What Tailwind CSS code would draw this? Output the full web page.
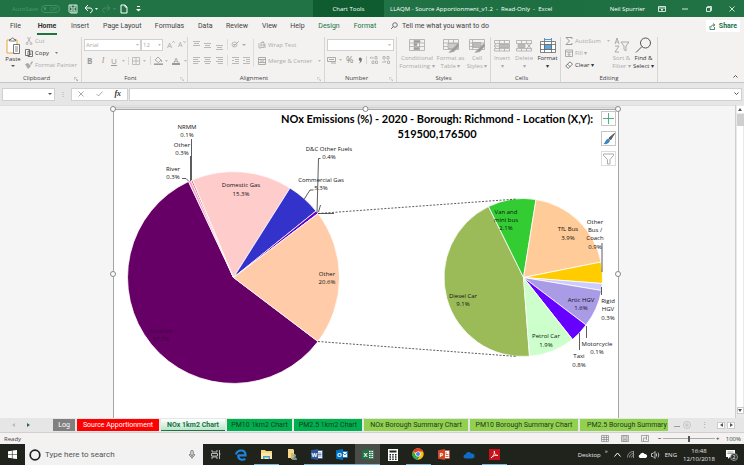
<!DOCTYPE html>
<html lang="en">
<head>
  <meta charset="UTF-8" />
  <meta name="viewport" content="width=device-width, initial-scale=1.0" />
  <title>LLAQM - Source Apportionment_v1.2 - Read-Only - Excel</title>
  <script src="https://cdn.jsdelivr.net/npm/@tailwindcss/browser@4"></script>
</head>
<body class="h-screen flex flex-col overflow-hidden bg-[#e6e6e6] font-['Open_Sans',sans-serif] text-[6px] leading-[8px] text-[#444]">

<!-- Title bar -->
<header class="h-[17px] shrink-0 flex items-center bg-[#217346] text-white">
  <div class="w-[313px] flex items-center pl-3">
    <label for="autosave" class="text-[#4f9570] w-[29px]">AutoSave</label>
    <button id="autosave" class="w-[19px] h-2 rounded-full border border-[#438d64] flex items-center gap-1 px-[2px] text-[5px] leading-[6px] text-[#4f9570]"><span class="size-[3px] rounded-full bg-[#4f9570]"></span>Off</button>
    <button aria-label="Save" class="ml-2 w-[10px]"><svg viewBox="0 0 10 10" class="size-[10px]" fill="none" stroke="#dcebe2"><path d="M1 1h8v8H2.500L1 7.500zM3 1v3h4V1M3 9V6h4v3M5 7v2"/></svg></button>
    <button aria-label="Undo" class="ml-[6px] w-[14px]"><svg viewBox="0 0 14 10" class="w-[14px] h-[10px]" fill="none" stroke="#fff"><path d="M4 1 1 4l3 3M1 4h5c3 0 3 4 0 5"/><path d="M11 4h3l-1.500 2z" fill="#fff" stroke="none"/></svg></button>
    <button aria-label="Redo" class="ml-1 w-[14px]"><svg viewBox="0 0 14 10" class="w-[14px] h-[10px]" fill="none" stroke="#438d64"><path d="M5 1l3 3-3 3M8 4H3C0 4 0 8 3 9"/><path d="M11 4h3l-1.500 2z" fill="#438d64" stroke="none"/></svg></button>
    <button aria-label="New" class="ml-1 w-2"><svg viewBox="0 0 8 10" class="w-2 h-[10px]" fill="none" stroke="#fff"><path d="M1 1h4l2 2v6H1zM5 1v2h2"/></svg></button>
    <button aria-label="Customize" class="ml-2 w-[5px]"><svg viewBox="0 0 5 6" class="w-[5px] h-[6px]" fill="#fff"><path d="M1 0h3v1H1zM0 3h5L2.500 5.500z"/></svg></button>
  </div>
  <div class="w-[71px] h-full flex items-center justify-center bg-[#0e5c2f]">Chart Tools</div>
  <div class="flex-1 h-full flex items-center bg-linear-to-r from-[#217346] via-[#1d6e41] to-[#217346] pl-[6px]">
    <span class="flex-1 whitespace-pre">LLAQM - Source Apportionment_v1.2  -  Read-Only  -  Excel</span>
    <span>Neil Spurrier</span>
    <button aria-label="Ribbon options" class="ml-[13px] w-2"><svg viewBox="0 0 8 6" class="w-2 h-[6px]" fill="none" stroke="#fff" stroke-width=".8"><path d="M.5.5h7v5h-7zM.5 2h7M4 5V3M3 4l1-1 1 1"/></svg></button>
    <button aria-label="Minimize" class="ml-4 w-[6px]"><svg viewBox="0 0 6 6" class="size-[6px]" stroke="#fff" stroke-width=".8"><path d="M0 3h6"/></svg></button>
    <button aria-label="Restore" class="ml-[18px] w-[6px]"><svg viewBox="0 0 6 6" class="size-[6px]" fill="none" stroke="#fff" stroke-width=".8"><path d="M.5 1.500h4v4h-4zM1.500 1.500v-1h4v4h-1"/></svg></button>
    <button aria-label="Close" class="ml-[17px] mr-[9px] w-[6px]"><svg viewBox="0 0 6 6" class="size-[6px]" stroke="#fff" stroke-width=".8"><path d="M.5.5l5 5M5.500.5l-5 5"/></svg></button>
  </div>
</header>

<!-- Ribbon tabs -->
<nav class="h-[18px] shrink-0 flex items-center bg-[#f3f2f1] pl-[10px] pr-1 font-['Roboto',sans-serif] text-[7px]">
  <button class="w-[27px] text-left">File</button>
  <button class="w-5 h-[14px] mt-1 pb-[2px] border-b-2 border-[#217346] font-bold text-[#333]">Home</button>
  <button class="w-[46px] text-center">Insert</button>
  <button class="w-[38px] whitespace-nowrap">Page Layout</button>
  <button class="w-[57px]">Formulas</button>
  <button class="w-[14px]">Data</button>
  <button class="w-[50px]">Review</button>
  <button class="w-[15px]">View</button>
  <button class="w-[41px]">Help</button>
  <button class="w-[22px] text-[#217346]">Design</button>
  <button class="w-[50px] text-[#217346]">Format</button>
  <svg viewBox="0 0 8 8" class="size-2 mr-1" fill="none" stroke="#555" stroke-width=".8"><circle cx="5" cy="3" r="2.300"/><path d="M3.300 4.700 1 7"/></svg>
  <input aria-label="Tell me" class="flex-1 min-w-0 placeholder:text-[#444] outline-none" placeholder="Tell me what you want to do">
  <button class="bg-white w-[34px] h-3 flex items-center justify-center gap-[3px] text-[#217346] font-bold"><svg viewBox="0 0 7 7" class="size-[7px]" fill="none" stroke="#217346" stroke-width=".8"><path d="M1 3v3.500h4.500V4M2 4.500C2 2.500 3 2 5 2M4 .5 6 2 4 3.500"/></svg>Share</button>
</nav>

<!-- Ribbon -->
<section class="h-[48px] shrink-0 flex bg-[#f3f2f1] border-b border-[#c8c6c4] pt-[2px] text-[#aaa] whitespace-nowrap">
  <div class="w-[82px] border-r border-[#d8d6d4] flex flex-col">
    <div class="flex-1 flex pl-[5px]">
      <button class="w-4 flex flex-col items-center text-[#333] mr-1"><svg viewBox="0 0 16 18" class="w-4 h-[18px]" fill="#fff"><path d="M2 3h10v13H2z" stroke="#e8a33d"/><path d="M4.500 4V2.500h1.500a1.500 1.500 0 0 1 3 0h1.500V4z" stroke="#555" stroke-width=".8"/><path d="M8.500 7.500h6v9h-6z" stroke="#555" stroke-width=".8"/><path d="M10 10h3m-3 2h3m-3 2h3" stroke="#555" stroke-width=".7"/></svg>Paste<svg viewBox="0 0 4 2" class="w-1 h-[2px] mt-[2px]" fill="#555"><path d="M0 0h4L2 2z"/></svg></button>
      <div class="flex flex-col gap-1">
        <button class="flex items-center gap-[2px]"><svg viewBox="0 0 8 8" class="size-2" fill="none" stroke="#aaa" stroke-width=".8"><path d="M2.500 0l3 5.500M5.500 0l-3 5.500"/><circle cx="2" cy="6.500" r="1"/><circle cx="6" cy="6.500" r="1"/></svg>Cut</button>
        <button class="flex items-center gap-[2px] text-[#333]"><svg viewBox="0 0 8 8" class="size-2" fill="#fff" stroke="#555" stroke-width=".8"><path d="M.5.5h4v6h-4zM3 2h4.500v5.500H3zM4 4h2.500M4 5.500h2.500"/></svg>Copy<svg viewBox="0 0 4 2" class="w-[3px] h-[2px] ml-1" fill="#555"><path d="M0 0h4L2 2z"/></svg></button>
        <button class="flex items-center gap-[2px]"><svg viewBox="0 0 8 8" class="size-2" fill="#aaa"><path d="M0 3l3-1 3 3-3 3zM5 3l2-3 1 1-2 3z"/></svg>Format Painter</button>
      </div>
    </div>
    <div class="text-center text-[#444] relative pr-2">Clipboard<svg viewBox="0 0 4 4" class="absolute right-[3px] top-[3px] size-1" fill="none" stroke="#999" stroke-width=".7"><path d="M0 3V0h3M1.500 1.500 4 4M4 2v2H2"/></svg></div>
  </div>

  <div class="w-[106px] border-r border-[#d8d6d4] flex flex-col">
    <div class="flex-1 flex flex-col gap-[5px] pl-[2px] pt-[2px]">
      <div class="flex items-center">
        <div class="relative w-[57px]"><select aria-label="Font" class="appearance-none w-full h-3 px-[1px] bg-white border border-[#d0d0d0]"><option>Arial</option></select><svg viewBox="0 0 4 2" class="absolute right-[2px] top-[5px] w-[3px] h-[2px]" fill="#aaa"><path d="M0 0h4L2 2z"/></svg></div>
        <div class="relative w-[22px]"><select aria-label="Font size" class="appearance-none w-full h-3 px-[1px] bg-white border border-[#d0d0d0]"><option>12</option></select><svg viewBox="0 0 4 2" class="absolute right-[2px] top-[5px] w-[3px] h-[2px]" fill="#aaa"><path d="M0 0h4L2 2z"/></svg></div>
        <button aria-label="Increase font size" class="ml-1 flex text-[8px]">A<svg viewBox="0 0 3 2" class="w-[3px] h-[2px]" fill="none" stroke="#999" stroke-width=".7"><path d="M.3 1.700 1.500.5l1.200 1.200"/></svg></button>
        <button aria-label="Decrease font size" class="ml-[3px] flex text-[7px]">A<svg viewBox="0 0 3 2" class="w-[3px] h-[2px]" fill="none" stroke="#999" stroke-width=".7"><path d="M.3.300 1.500 1.500 2.700.3"/></svg></button>
      </div>
      <div class="flex items-center pl-[3px] text-[8px] text-[#999]">
        <button class="font-bold w-[11px] text-left">B</button>
        <button class="italic font-['Liberation_Serif',serif] w-[11px]">I</button>
        <button class="underline w-[11px]">U</button>
        <svg viewBox="0 0 4 2" class="w-[3px] h-[2px] ml-[3px]" fill="#aaa"><path d="M0 0h4L2 2z"/></svg>
        <button aria-label="Borders" class="ml-[3px] pl-[3px] border-l border-[#d8d6d4]"><svg viewBox="0 0 8 8" class="size-2" fill="none" stroke="#aaa" stroke-width=".7"><path d="M.5.500h7v7h-7zM4 .5v7M.5 4h7"/></svg></button>
        <svg viewBox="0 0 4 2" class="w-[3px] h-[2px] ml-[3px]" fill="#aaa"><path d="M0 0h4L2 2z"/></svg>
        <button aria-label="Fill colour" class="ml-1 pl-[3px] border-l border-[#d8d6d4]"><svg viewBox="0 0 9 9" class="size-[9px]" fill="none" stroke="#999" stroke-width=".8"><path d="M1 4l3-3 3 3-2.500 2.500zM7.500 4v2"/><path d="M0 8.200h9" stroke-width="1.500"/></svg></button>
        <svg viewBox="0 0 4 2" class="w-[3px] h-[2px] ml-[2px]" fill="#aaa"><path d="M0 0h4L2 2z"/></svg>
        <button class="ml-1 w-2 border-b-2 border-[#999] leading-[7px]">A</button>
        <svg viewBox="0 0 4 2" class="w-[3px] h-[2px] ml-1" fill="#aaa"><path d="M0 0h4L2 2z"/></svg>
      </div>
    </div>
    <div class="text-center text-[#444] relative pr-2">Font<svg viewBox="0 0 4 4" class="absolute right-[3px] top-[3px] size-1" fill="none" stroke="#bbb" stroke-width=".7"><path d="M0 3V0h3M1.500 1.500 4 4M4 2v2H2"/></svg></div>
  </div>

  <div class="w-[137px] border-r border-[#d8d6d4] flex flex-col">
    <div class="flex-1 flex pl-[5px]">
      <svg viewBox="0 0 62 32" class="w-[62px] h-8" fill="none" stroke="#aaa" stroke-width=".8">
        <path d="M0 4.500h7M1 6.500h5M0 8.500h7M11 6.500h7M12 8.500h5M11 10.500h7M23 8.500h7M24 10.500h5M23 12.500h7"/>
        <path d="M0 20.500h7M0 22.500h5M0 24.500h7M0 26.500h5M11 20.500h7M12 22.500h5M11 24.500h7M12 26.500h5M23 20.500h7M25 22.500h5M23 24.500h7M25 26.500h5"/>
        <path d="M34.500 2v11M34.500 18v11M60.500 2v28" stroke="#d8d6d4"/>
        <path d="M39 20.500h7M42 22.500h4M42 24.500h4M39 26.500h7M41 23.500h-2M50 20.500h7M53 22.500h4M53 24.500h4M50 26.500h7M50 23.500h2"/>
        <circle cx="41.500" cy="7.500" r="2.500"/><path d="M40 10l6-6M40 7.500h3"/><path d="M49 7h4l-2 2z" fill="#aaa" stroke="none"/>
      </svg>
      <div class="flex flex-col gap-2 pt-1 pl-[3px]">
        <button class="flex items-center gap-[2px]"><svg viewBox="0 0 8 8" class="size-2" fill="none" stroke="#aaa" stroke-width=".8"><path d="M1 2v5h2M3 1.500h3v5H3zM3 4h4M5 0v2M7 3v4"/></svg>Wrap Text</button>
        <button class="flex items-center gap-[2px]"><svg viewBox="0 0 8 8" class="size-2" fill="none" stroke="#999" stroke-width=".8"><path d="M.5.500h7v7h-7zM.5 2.500h7M.5 5.500h7M2 4h4"/></svg>Merge &amp; Center<svg viewBox="0 0 4 2" class="w-[3px] h-[2px] ml-1" fill="#aaa"><path d="M0 0h4L2 2z"/></svg></button>
      </div>
    </div>
    <div class="text-center text-[#444] relative pr-1">Alignment<svg viewBox="0 0 4 4" class="absolute right-[3px] top-[3px] size-1" fill="none" stroke="#bbb" stroke-width=".7"><path d="M0 3V0h3M1.500 1.500 4 4M4 2v2H2"/></svg></div>
  </div>

  <div class="w-[72px] border-r border-[#d8d6d4] flex flex-col">
    <div class="flex-1 flex flex-col gap-1 px-[2px] pt-[2px]">
      <div class="relative"><select aria-label="Number format" class="appearance-none w-full h-3 bg-white border border-[#d0d0d0]"><option></option></select><svg viewBox="0 0 4 2" class="absolute right-[3px] top-[5px] w-[3px] h-[2px]" fill="#aaa"><path d="M0 0h4L2 2z"/></svg></div>
      <div class="flex items-center text-[#888]">
        <button aria-label="Currency"><svg viewBox="0 0 9 8" class="w-[9px] h-2" fill="none" stroke="#999" stroke-width=".8"><path d="M.5 1.500h8v4h-8zM4 7h5M2 3.500h5"/></svg></button>
        <svg viewBox="0 0 4 2" class="w-[3px] h-[2px] ml-[3px]" fill="#aaa"><path d="M0 0h4L2 2z"/></svg>
        <button class="ml-1 text-[9px] leading-[10px]">%</button>
        <button aria-label="Comma style" class="ml-[5px]"><svg viewBox="0 0 4 7" class="w-1 h-[7px]" fill="#777"><path d="M2 .5a1.800 1.800 0 0 1 1.900 2C3.900 4.500 2.500 6 .8 6.500 1.800 5.500 2.200 4.800 2.200 4A1.800 1.800 0 0 1 2 .5z"/></svg></button>
        <button aria-label="Increase decimal" class="ml-1 pl-[3px] border-l border-[#d8d6d4]"><svg viewBox="0 0 8 8" class="size-2" fill="none" stroke="#aaa" stroke-width=".8"><path d="M4 2H0l1.500-1.500M5 .5h2v2.500H5zM2 5h2v2.500H2zM5.500 5h2v2.500h-2z"/></svg></button>
        <button aria-label="Decrease decimal" class="ml-1"><svg viewBox="0 0 8 8" class="size-2" fill="none" stroke="#aaa" stroke-width=".8"><path d="M0 6h4L2.500 4.500M1 .5h2v2.500H1zM5 .5h2v2.500H5zM5.500 5h2v2.500h-2z"/></svg></button>
      </div>
    </div>
    <div class="text-center text-[#444] relative pr-2">Number<svg viewBox="0 0 4 4" class="absolute right-[3px] top-[3px] size-1" fill="none" stroke="#bbb" stroke-width=".7"><path d="M0 3V0h3M1.500 1.500 4 4M4 2v2H2"/></svg></div>
  </div>

  <div class="w-[94px] border-r border-[#d8d6d4] flex flex-col">
    <div class="flex-1 flex justify-center gap-[3px] text-center">
      <button class="w-[34px] flex flex-col items-center"><svg viewBox="0 0 16 16" class="w-4 h-[17px] shrink-0" fill="none" stroke="#aaa" stroke-width=".8"><path d="M.5 2h15v11H.5zM.5 5.500h15M.5 9h15M5.500 2v11M10.500 2v11"/><path d="M5 3h6v2H5zM5 6h3v2H5zM5 10h5v2H5z" fill="#999"/></svg>Conditional<br>Formatting ▾</button>
      <button class="w-[27px] flex flex-col items-center"><svg viewBox="0 0 16 16" class="w-4 h-[17px] shrink-0" fill="none" stroke="#aaa" stroke-width=".8"><path d="M.5 2h15v10H.5zM.5 5.500h15M.5 9h15M5.500 2v10M10.500 2v10"/><path d="M5 6h10v5H5z" fill="#ccc"/><path d="M15 6l-6 6-3 3 5-1 5-6z" fill="#999"/></svg>Format as<br>Table ▾</button>
      <button class="w-[20px] flex flex-col items-center"><svg viewBox="0 0 16 16" class="w-4 h-[17px] shrink-0" fill="none" stroke="#aaa" stroke-width=".8"><path d="M.5 2h15v10H.5zM.5 5.500h15M.5 9h15M3.500 2v10"/><path d="M4 5h8v5H4z" fill="#bbb"/><path d="M15 6l-6 6-3 3 5-1 5-6z" fill="#999"/></svg>Cell<br>Styles ▾</button>
    </div>
    <div class="text-center text-[#444]">Styles</div>
  </div>

  <div class="w-[70px] border-r border-[#d8d6d4] flex flex-col">
    <div class="flex-1 flex justify-center gap-1 text-center">
      <button class="w-[17px] flex flex-col items-center"><svg viewBox="0 0 16 16" class="w-4 h-[17px] shrink-0" fill="none" stroke="#aaa" stroke-width=".8"><path d="M.5 3h15v3H.5zM.5 11h15v2.500H.5zM5.500 3v3M10.500 3v3M5.500 11v2.500M10.500 11v2.500"/><path d="M5 7h10.500v3H5z" fill="#bbb"/><path d="M4 8.500H0l2-2m-2 2 2 2"/></svg>Insert<br>▾</button>
      <button class="w-[19px] flex flex-col items-center"><svg viewBox="0 0 16 16" class="w-4 h-[17px] shrink-0" fill="none" stroke="#aaa" stroke-width=".8"><path d="M.5 3h15v3H.5zM.5 11h15v2.500H.5zM5.500 3v3M10.500 3v3M5.500 11v2.500M10.500 11v2.500"/><path d="M2 7h7v3H2z" fill="#bbb"/><path d="M11 6l4 5M15 6l-4 5" stroke="#999"/></svg>Delete<br>▾</button>
      <button class="w-[20px] flex flex-col items-center text-[#333]"><svg viewBox="0 0 16 16" class="w-4 h-[17px] shrink-0" fill="none" stroke="#666" stroke-width=".8"><path d="M.5 4h15v11H.5zM.5 7h15M.5 12h15M4.500 4v11M11.500 4v11" fill="#fff"/><path d="M4.500 7h7v5h-7z" fill="#5ba7e0"/><path d="M4.500.500v3M11.500.5v3M5 2h6" stroke="#2f7fbf"/></svg>Format<br>▾</button>
    </div>
    <div class="text-center text-[#444] pr-2">Cells</div>
  </div>

  <div class="w-[97px] border-r border-[#d8d6d4] flex flex-col">
    <div class="flex-1 flex pl-1">
      <div class="w-[46px] flex flex-col gap-1">
        <button class="flex items-center gap-[2px]"><svg viewBox="0 0 8 8" class="size-2" fill="none" stroke="#999"><path d="M7 2V.500H1L4.500 4 1 7.500h6V6"/></svg>AutoSum<svg viewBox="0 0 4 2" class="w-[3px] h-[2px] ml-1" fill="#aaa"><path d="M0 0h4L2 2z"/></svg></button>
        <button class="flex items-center gap-[2px]"><svg viewBox="0 0 8 8" class="size-2" fill="none" stroke="#999" stroke-width=".8"><path d="M.5 1h7v6.500h-7zM.5 3h7M4 3v3.500M2.500 5 4 6.500 5.500 5"/></svg>Fill ▾</button>
        <button class="flex items-center gap-[2px] text-[#333]"><svg viewBox="0 0 8 8" class="size-2" fill="#fff" stroke="#555" stroke-width=".8"><path d="M.7 5 5 .8l2.500 2.400L3.200 7.300zM2.500 3.200 5 5.700"/></svg>Clear ▾</button>
      </div>
      <button class="w-[21px] flex flex-col items-center"><svg viewBox="0 0 16 17" class="w-4 h-[17px] shrink-0" fill="none" stroke="#999" stroke-width=".8"><path d="M1 7l2-6 2 6M2 5h2M1 9h4l-4 6h4M7 5h8l-3 4v5l-2-1.500V9z"/></svg>Sort &amp;<br>Filter ▾</button>
      <button class="w-[23px] flex flex-col items-center text-[#333]"><svg viewBox="0 0 17 17" class="size-[17px] shrink-0" fill="none" stroke="#555"><circle cx="10.500" cy="6" r="5"/><path d="M7 9.500 1 15.500"/></svg>Find &amp;<br>Select ▾</button>
    </div>
    <div class="text-center text-[#444]">Editing</div>
  </div>
  <div class="flex-1 flex items-end justify-end pr-[6px] pb-1"><button aria-label="Collapse ribbon"><svg viewBox="0 0 5 4" class="w-[5px] h-1" fill="none" stroke="#555"><path d="M.5 3.500l2-2 2 2"/></svg></button></div>
</section>

<!-- Formula bar -->
<section class="h-[22px] shrink-0 flex items-center pl-[2px] pr-[2px]">
  <div class="relative w-[53px]"><input aria-label="Name box" class="block w-full h-[13px] bg-white border border-[#d0d0d0]"><svg viewBox="0 0 4 2" class="absolute right-[3px] top-[5px] w-1 h-[2px]" fill="#555"><path d="M0 0h4L2 2z"/></svg></div>
  <span class="w-4 text-center text-[#999]">⋮</span>
  <div class="w-[57px] h-[13px] flex items-center justify-around bg-white border border-[#d0d0d0]">
    <button aria-label="Cancel"><svg viewBox="0 0 6 6" class="size-[6px]" stroke="#aaa"><path d="M.5.500l5 5M5.500.5l-5 5"/></svg></button>
    <button aria-label="Enter"><svg viewBox="0 0 7 6" class="w-[7px] h-[6px]" fill="none" stroke="#aaa"><path d="M.5 3l2 2L6.500.500"/></svg></button>
    <button class="font-['Liberation_Serif',serif] italic font-bold text-[8px] text-[#333]">fx</button>
  </div>
  <div class="relative flex-1 ml-[1px]"><input aria-label="Formula" class="block w-full h-[13px] bg-white border border-[#d0d0d0]"><svg viewBox="0 0 5 4" class="absolute right-[3px] top-1 w-[5px] h-1" fill="none" stroke="#555"><path d="M.5.500l2 2 2-2"/></svg></div>
</section>

<!-- Chart sheet -->
<main class="flex-1 min-h-0 flex bg-[#f5f5f5]">
  <div class="relative flex-1 min-w-0">
    <svg viewBox="0 105 735 313" class="size-full" preserveAspectRatio="xMidYMin slice" role="img" aria-label="NOx Emissions pie of pie chart">
      <path d="M0 105.500h735" stroke="#dedede"/>
      <path d="M113 109h505v309H113z" fill="#fff"/>
      <path d="M113.500 418V109.500h505V418" fill="none" stroke="#a6a6a6"/>
      <path d="M113 107.500h505" stroke="#d0d0d0" stroke-width="2"/>
      <g stroke="#fff" stroke-width=".8" stroke-linejoin="round">
        <path d="M233.500 277.500 318 341.500A106 106 0 1 1 188.500 181.500Z" fill="#660066"/>
        <path d="M233.500 277.500 188.500 181.500A106 106 0 0 1 191 180.500Z" fill="#ff99cc"/>
        <path d="M233.500 277.500 191 180.500A106 106 0 0 1 192.500 179.800Z" fill="#c0504d"/>
        <path d="M233.500 277.500 192.500 179.800A106 106 0 0 1 290 188Z" fill="#ffcccc"/>
        <path d="M233.500 277.500 290 188A106 106 0 0 1 316 211Z" fill="#3333cc"/>
        <path d="M233.500 277.500 316 211A106 106 0 0 1 318 213.500Z" fill="#6600cc"/>
        <path d="M233.500 277.500 318 213.500A106 106 0 0 1 318 341.500Z" fill="#ffcba8"/>
        <path d="M523.500 277.500 529.500 356.300A79 79 0 0 1 488.500 206.500Z" fill="#9bbb59"/>
        <path d="M523.500 277.500 488.500 206.500A79 79 0 0 1 536 199.500Z" fill="#33cc33"/>
        <path d="M523.500 277.500 536 199.500A79 79 0 0 1 601 262Z" fill="#ffcc99"/>
        <path d="M523.500 277.500 601 262A79 79 0 0 1 602.300 283.500Z" fill="#ffcc00"/>
        <path d="M523.500 277.500 602.300 283.500A79 79 0 0 1 601.500 290.500Z" fill="#ccccff"/>
        <path d="M523.500 277.500 601.500 290.500A79 79 0 0 1 586 325Z" fill="#a99be6"/>
        <path d="M523.500 277.500 586 325A79 79 0 0 1 572.500 339.500Z" fill="#6600ff"/>
        <path d="M523.500 277.500 572.500 339.500A79 79 0 0 1 529.500 356.300Z" fill="#ccffcc"/>
      </g>
      <g fill="none" stroke="#333" stroke-width=".8">
        <path d="M318 213.500 517 199M318 341.500 517 356.500" stroke-dasharray="2 1.500"/>
        <path d="M191.500 139v41M190.500 156v25M182 178.500h4l3 3M304 199.500l6-9.500h3.500M320.500 158.500h-2L317 213M318.500 212l2-7M318 213.500h16M602 243v29M601.500 287v8M579.500 333v17M586.500 326v12"/>
      </g>
      <g class="text-[6px]" text-anchor="middle" fill="#111">
        <text x="187" y="129">NRMM</text><text x="187" y="137">0.1%</text>
        <text x="182" y="147">Other</text><text x="182" y="155">0.3%</text>
        <text x="173" y="171">River</text><text x="173" y="179">0.3%</text>
        <text x="241" y="187">Domestic Gas</text><text x="241" y="196">15.3%</text>
        <text x="329" y="151">D&amp;C Other Fuels</text><text x="329" y="159">0.4%</text>
        <text x="321" y="182">Commercial Gas</text><text x="321" y="190">5.3%</text>
        <text x="327" y="276">Other</text><text x="327" y="284">20.6%</text>
        <text x="161" y="333" fill="#3b003b">Aviation</text><text x="161" y="341" fill="#3b003b">57.7%</text>
        <text x="506" y="214">Van and</text><text x="506" y="222">mini bus</text><text x="506" y="230">2.1%</text>
        <text x="568" y="231">TfL Bus</text><text x="568" y="240">3.9%</text>
        <text x="595" y="224">Other</text><text x="595" y="232">Bus /</text><text x="595" y="240">Coach</text><text x="595" y="249">0.9%</text>
        <text x="463" y="298">Diesel Car</text><text x="463" y="306">9.1%</text>
        <text x="581" y="302">Artic HGV</text><text x="581" y="310">1.6%</text>
        <text x="608" y="303">Rigid</text><text x="608" y="311">HGV</text><text x="608" y="320">0.3%</text>
        <text x="546" y="338">Petrol Car</text><text x="546" y="347">1.9%</text>
        <text x="597" y="346">Motorcycle</text><text x="597" y="354">0.1%</text>
        <text x="579" y="358">Taxi</text><text x="579" y="367">0.8%</text>
      </g>
      <g class="font-['Lato',sans-serif] text-[11px] font-bold" text-anchor="middle" fill="#000">
        <text x="437" y="123">NOx Emissions (%) - 2020 - Borough: Richmond - Location (X,Y):</text>
        <text x="437" y="138">519500,176500</text>
      </g>
      <g fill="#fff" stroke="#888"><circle cx="113" cy="109" r="2.500"/><circle cx="365.500" cy="109" r="2.500"/><circle cx="618" cy="109" r="2.500"/><circle cx="113" cy="274" r="2.500"/><circle cx="618" cy="274" r="2.500"/></g>
    </svg>
    <!-- Chart buttons float over the chart's corner -->
    <div class="absolute left-[601px] top-[6px] flex flex-col gap-[5px]">
      <button aria-label="Chart elements" class="size-[15px] bg-white border border-[#c6c6c6] flex items-center justify-center"><svg viewBox="0 0 11 11" class="size-[11px]" stroke="#4fae84"><path d="M0 5.500h11M5.500 0v11"/></svg></button>
      <button aria-label="Chart styles" class="size-[15px] bg-white border border-[#c6c6c6] flex items-center justify-center"><svg viewBox="0 0 12 12" class="size-3"><path d="M11.500.5 6 5l1.500 2z" fill="#666" stroke="#555"/><path d="M5.500 5.500 7 7.500C6 11 3 11.500.5 11 2.500 10 2 6.500 5.500 5.500z" fill="#3d86c0"/></svg></button>
      <button aria-label="Chart filters" class="size-[15px] bg-white border border-[#dcdcdc] flex items-center justify-center"><svg viewBox="0 0 11 12" class="w-[11px] h-3" fill="none" stroke="#aaa"><path d="M.5 1h10v1.500L7 6.500V11H4.500V6.500L.5 2.500z"/></svg></button>
    </div>
  </div>
  <div class="w-[9px] flex flex-col items-center bg-[#e9e9e9] border-l border-[#cfcfcf]">
    <button aria-label="Scroll up" class="size-[7px] mt-[1px] bg-white flex items-center justify-center"><svg viewBox="0 0 4 3" class="w-1 h-[3px]" fill="#555"><path d="M0 3h4L2 0z"/></svg></button>
    <div class="w-[7px] h-3 mt-[1px] bg-[#cfcfcf]"></div>
    <div class="w-[6px] flex-1 bg-white"></div>
    <button aria-label="Scroll down" class="size-[7px] mb-1 bg-white border border-[#ccc] flex items-center justify-center"><svg viewBox="0 0 4 3" class="w-1 h-[3px]" fill="#555"><path d="M0 0h4L2 3z"/></svg></button>
  </div>
</main>

<!-- Sheet tabs -->
<nav class="h-[15px] shrink-0 flex items-start pt-[1px] gap-[2px] bg-[#e6e6e6] border-b border-[#d0d0d0] font-['Roboto',sans-serif] text-[7px] text-[#1c3a1c] whitespace-nowrap">
  <div class="w-[51px] h-3 flex items-center pl-3 gap-3"><button aria-label="Previous sheet"><svg viewBox="0 0 3 4" class="w-[3px] h-1" fill="#bbb"><path d="M3 0v4L0 2z"/></svg></button><button aria-label="Next sheet"><svg viewBox="0 0 3 4" class="w-[3px] h-1" fill="#217346"><path d="M0 0v4l3-2z"/></svg></button></div>
  <button class="w-[22px] h-3 bg-[#808080] text-white">Log</button>
  <button class="w-[82px] h-3 bg-[#ff0000] text-white">Source Apportionment</button>
  <button class="w-[64px] h-3 bg-linear-to-b from-white to-[#b5e6c8] border-b border-[#217346] text-[#217346] font-bold">NOx 1km2 Chart</button>
  <button class="w-[65px] h-3 bg-[#00b050]">PM10 1km2 Chart</button>
  <button class="w-[68px] h-3 bg-[#00b050]">PM2.5 1km2 Chart</button>
  <button class="w-[104px] h-3 bg-[#92d050]">NOx Borough Summary Chart</button>
  <button class="w-[108px] h-3 bg-[#92d050]">PM10 Borough Summary Chart</button>
  <button class="w-[88px] h-3 bg-[#92d050] overflow-hidden text-left pl-[7px]">PM2.5 Borough Summary Chart</button>
  <div class="flex-1 h-3 flex items-center pl-[2px]">
    <button class="w-[10px] text-[#444] font-bold">...</button>
    <button aria-label="New sheet" class="ml-[1px]"><svg viewBox="0 0 8 8" class="size-2" fill="none" stroke="#bbb" stroke-width=".8"><circle cx="4" cy="4" r="3.500"/><path d="M2 4h4M4 2v4"/></svg></button>
    <span class="flex-1 text-center text-[#999]">⋮</span>
    <button aria-label="Scroll left" class="w-2 h-[7px] bg-white border border-[#ccc] flex items-center justify-center"><svg viewBox="0 0 3 4" class="w-[3px] h-1" fill="#555"><path d="M3 0v4L0 2z"/></svg></button>
    <button aria-label="Scroll right" class="ml-[2px] mr-[9px] w-2 h-[7px] bg-white border border-[#ccc] flex items-center justify-center"><svg viewBox="0 0 3 4" class="w-[3px] h-1" fill="#555"><path d="M0 0v4l3-2z"/></svg></button>
  </div>
</nav>

<!-- Status bar -->
<section class="h-[11px] shrink-0 flex items-center bg-[#f3f2f1] pl-1 pr-[3px]">
  <span class="flex-1">Ready</span>
  <button aria-label="Normal view"><svg viewBox="0 0 8 7" class="w-2 h-[7px]" fill="none" stroke="#888" stroke-width=".7"><path d="M.5.500h7v6h-7zM.5 2.500h7M.5 4.500h7M3 .5v6M5.500.5v6"/></svg></button>
  <button aria-label="Page layout view" class="ml-3"><svg viewBox="0 0 8 7" class="w-2 h-[7px]" fill="none" stroke="#888" stroke-width=".7"><path d="M.5.500h7v6h-7zM2 1v5h4V1zM2.500 3h3M2.500 4.500h3"/></svg></button>
  <button aria-label="Page break view" class="ml-3"><svg viewBox="0 0 8 7" class="w-2 h-[7px]" fill="none" stroke="#888" stroke-width=".7"><path d="M.5.500h7v6h-7zM2.500 6V3h3V.5M5.500 3v2"/></svg></button>
  <button class="ml-2 w-[6px] font-bold">−</button>
  <input aria-label="Zoom" type="range" min="10" max="190" value="100" class="appearance-none w-[52px] h-[1px] bg-[#aaa] [&::-webkit-slider-thumb]:appearance-none [&::-webkit-slider-thumb]:w-[2px] [&::-webkit-slider-thumb]:h-[6px] [&::-webkit-slider-thumb]:bg-[#555]">
  <button class="w-[6px] font-bold">+</button>
  <span class="ml-[5px]">100%</span>
</section>

<!-- Taskbar -->
<footer class="h-[21px] shrink-0 flex bg-[#20221c] text-white">
  <button aria-label="Start" class="w-[25px] flex items-center justify-center"><svg viewBox="0 0 9 9" class="size-[9px]" fill="#fff"><path d="M0 1.300 3.900.7v3.500H0zM4.500.6 9 0v4.200H4.500zM0 4.800h3.900v3.500L0 7.700zM4.500 4.800H9V9l-4.500-.6z"/></svg></button>
  <div class="w-[178px] flex items-center bg-[#f2f2f2] pl-1">
    <svg viewBox="0 0 12 12" class="size-3" fill="none" stroke="#222" stroke-width="1.700"><circle cx="6" cy="6" r="4.800"/></svg>
    <input aria-label="Search" class="flex-1 min-w-0 ml-1 font-['Roboto',sans-serif] text-[8px] leading-3 placeholder:text-[#555] outline-none" placeholder="Type here to search">
    <svg viewBox="0 0 6 9" class="w-[6px] h-[9px] mr-2" fill="none" stroke="#555" stroke-width=".8"><rect x="1.800" y=".5" width="2.400" height="5" rx="1.200"/><path d="M.5 4c0 4 5 4 5 0M3 7v1.500"/></svg>
  </div>
  <div class="w-[304px] grid grid-cols-12">
    <button aria-label="Task view" class="flex items-center justify-center"><svg viewBox="0 0 10 9" class="w-[10px] h-[9px]" fill="none" stroke="#ddd" stroke-width=".8"><path d="M1 0v2h5V0M1 9V7h5v2M.5 3.500h6v2.500h-6zM8.500 0v9M8 4h1.500"/></svg></button>
    <button aria-label="Edge" class="flex items-center justify-center"><svg viewBox="0 0 12 12" class="size-3" fill="none" stroke="#1a86dd" stroke-width="2.200"><path d="M3 6.300h7.500C10.500 3 8.500 1.500 6.300 1.500 3.500 1.500 1.500 3.500 1 5.500M3.300 6c-.5 5 4.500 5.500 7 3.800"/></svg></button>
    <button aria-label="File Explorer" class="flex items-center justify-center border-b border-[#76b9ed]"><svg viewBox="0 0 11 9" class="w-[11px] h-[9px]"><path d="M0 0h4l1 1h6v8H0z" fill="#f5d77c"/><path d="M0 3h11v6H0z" fill="#fbe8a8"/><path d="M2 9V6h7v3H7.500V7.500h-4V9z" fill="#48a0dc"/></svg></button>
    <button aria-label="Folder" class="flex items-center justify-center"><svg viewBox="0 0 10 11" class="w-[10px] h-[11px]"><path d="M1 0h5l1 1v8H1z" fill="#f3d98b"/><path d="M4 4h2v6H4z" fill="#d9b75d"/><circle cx="7.500" cy="6.500" r="1.500" fill="#8aa"/><path d="M5 11c0-4 5-4 5 0z" fill="#7a9590"/></svg></button>
    <button aria-label="Word" class="flex items-center justify-center border-b border-[#76b9ed]"><svg viewBox="0 0 12 11" class="w-3 h-[11px]"><path d="M6 1.500h5.500v8H6z" fill="#fff" stroke="#2b579a" stroke-width=".7"/><path d="M7 4h3.500M7 5.500h3.500M7 7h3.500" stroke="#2b579a" stroke-width=".7"/><path d="M0 1.200 7 0v11L0 9.800z" fill="#2b579a"/><text x="3.500" y="7.500" font-size="6" font-weight="700" fill="#fff" text-anchor="middle">W</text></svg></button>
    <button aria-label="Outlook" class="flex items-center justify-center border-b border-[#76b9ed]"><svg viewBox="0 0 12 11" class="w-3 h-[11px]"><path d="M6 2.500h5.500v6H6z" fill="#fff" stroke="#0072c6" stroke-width=".8"/><path d="M6 3l3 3 2.500-3" fill="none" stroke="#0072c6" stroke-width=".8"/><path d="M0 1.200 7 0v11L0 9.800z" fill="#0072c6"/><text x="3.500" y="7.500" font-size="6" font-weight="700" fill="#fff" text-anchor="middle">O</text></svg></button>
    <button aria-label="Excel" class="flex items-center justify-center border-b border-[#76b9ed] bg-[#4a4c47]"><svg viewBox="0 0 12 11" class="w-3 h-[11px]"><path d="M6 1.500h5.500v8H6z" fill="#fff" stroke="#217346" stroke-width=".7"/><path d="M7 3.500h4M7 5.500h4M7 7.500h4M9 2v7" stroke="#217346" stroke-width=".8"/><path d="M0 1.200 7 0v11L0 9.800z" fill="#217346"/><text x="3.500" y="7.500" font-size="6" font-weight="700" fill="#fff" text-anchor="middle">X</text></svg></button>
    <button aria-label="Calculator" class="flex items-center justify-center"><svg viewBox="0 0 10 12" class="w-[10px] h-3"><path d="M0 0h10v12H0z" fill="#fff"/><path d="M1.500 1.500h7v2h-7zM1.500 5h1.500v1.500H1.500zM4.200 5h1.500v1.500H4.200zM7 5h1.500v1.500H7zM1.500 7.300h1.500v1.500H1.500zM4.200 7.300h1.500v1.500H4.200zM7 7.300h1.500v1.500H7zM1.500 9.500h1.500V11H1.500zM4.200 9.500h1.500V11H4.200zM7 9.500h1.500V11H7z" fill="#222"/></svg></button>
    <button aria-label="Chrome" class="flex items-center justify-center border-b border-[#76b9ed]"><svg viewBox="0 0 12 12" class="size-3"><circle cx="6" cy="6" r="5.700" fill="#fbc116"/><path d="M6 6 1 3.200A5.700 5.700 0 0 1 11.200 3.600L6 3.600z" fill="#e33b2e"/><path d="M1 3.200A5.700 5.700 0 0 0 5.500 11.700L8 7.500 4 7.500z" fill="#2da94f"/><circle cx="6" cy="6" r="2.600" fill="#fff"/><circle cx="6" cy="6" r="2" fill="#4587f3"/></svg></button>
    <button aria-label="PowerPoint" class="flex items-center justify-center"><svg viewBox="0 0 12 11" class="w-3 h-[11px]"><path d="M6 1.500h5.500v8H6z" fill="#fff" stroke="#d24726" stroke-width=".7"/><path d="M8 3v2.500h2.500M7.500 7.500h3" stroke="#d24726" stroke-width=".8" fill="none"/><path d="M0 1.200 7 0v11L0 9.800z" fill="#d24726"/><text x="3.500" y="7.500" font-size="6" font-weight="700" fill="#fff" text-anchor="middle">P</text></svg></button>
    <button aria-label="OneDrive" class="flex items-center justify-center"><svg viewBox="0 0 12 8" class="w-3 h-2"><path d="M2.500 7.500a2 2 0 0 1 0-4A3.300 3.300 0 0 1 8.500 2.500a2.500 2.500 0 0 1 1 5z" fill="#0f6cc4"/></svg></button>
    <button aria-label="Acrobat" class="flex items-center justify-center border-b border-[#76b9ed]"><svg viewBox="0 0 11 11" class="size-[11px]"><path d="M0 0h11v11H0z" fill="#c8101a"/><path d="M2 9c2-1 4-5 3.500-7-.8 0-.5 4 3.500 4.500C7 5.800 3 7 2 9z" fill="none" stroke="#fff" stroke-width=".8"/></svg></button>
  </div>
  <div class="flex-1 flex items-center justify-end text-[#e6e6e6]">
    <span>Desktop</span><span class="ml-1 -mt-2">»</span>
    <button aria-label="Hidden icons" class="ml-[6px]"><svg viewBox="0 0 7 5" class="w-[7px] h-[5px]" fill="none" stroke="#fff"><path d="M.5 4.500l3-3.500 3 3.500"/></svg></button>
    <svg viewBox="0 0 7 7" class="size-[7px] ml-[6px]" fill="none" stroke="#aaa" stroke-width=".8"><path d="M.5 6.500C.5 3 3 .5 6.500.5M2.500 6.500c0-2 1.500-4 4-4M4.500 6.500c0-1 1-2 2-2M6.500 0v7"/></svg>
    <svg viewBox="0 0 9 6" class="w-[9px] h-[6px] ml-1" fill="#fff"><path d="M2 6a1.700 1.700 0 0 1 0-3.300A2.500 2.500 0 0 1 6.500 2 2 2 0 0 1 7.500 6z"/></svg>
    <svg viewBox="0 0 9 8" class="w-[9px] h-2 ml-1" fill="none" stroke="#ddd" stroke-width=".8"><path d="M.5 2.500h1.500l2-2v7l-2-2H.5zM5.500 2.500v3M7 1.500c1 1.500 1 3.500 0 5"/></svg>
    <span class="ml-[5px]">ENG</span>
    <time datetime="2018-10-12T16:48" class="ml-[6px] w-8 text-center">16:48<br>12/10/2018</time>
    <button aria-label="Notifications" class="ml-[10px] mr-[6px]"><svg viewBox="0 0 13 12" class="w-[13px] h-3"><path d="M1 1h9v7H5L3 10V8H1z" fill="#fff"/><path d="M2.500 3h6M2.500 4.500h6" stroke="#777" stroke-width=".7"/><circle cx="9" cy="8" r="3.500" fill="#333" stroke="#bbb" stroke-width=".7"/><text x="9" y="10" font-size="5" fill="#fff" text-anchor="middle">2</text></svg></button>
  </div>
</footer>

</body>
</html>
